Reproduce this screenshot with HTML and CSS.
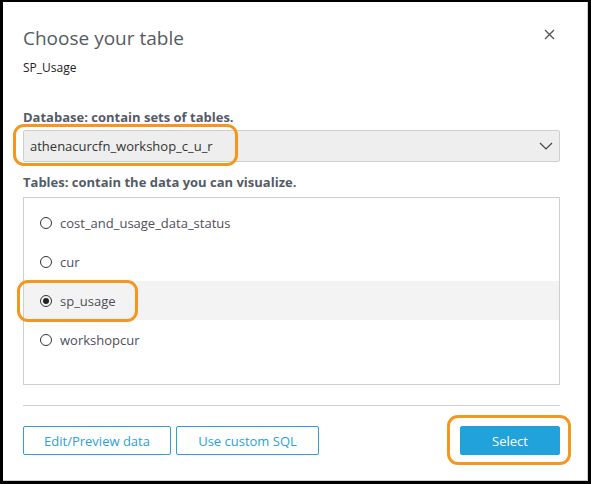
FILE: index.html
```html
<!DOCTYPE html>
<html>
<head>
<meta charset="utf-8">
<link rel="stylesheet" href="styles.css">
</head>
<body>
<div class="frame">
  <div class="dialog">
    <div class="header">
      <div class="titles">
        <h1 class="title">Choose your table</h1>
        <div class="subtitle">SP_Usage</div>
      </div>
      <button class="close" aria-label="Close">
        <svg width="11" height="11" viewBox="0 0 11 11"><path d="M1 1L10 10M10 1L1 10" stroke="#555" stroke-width="1.4" fill="none"/></svg>
      </button>
    </div>

    <div class="label label-db">Database: contain sets of tables.</div>
    <div class="select">
      <span class="select-text">athenacurcfn_workshop_c_u_r</span>
      <svg class="chevron" width="14" height="8" viewBox="0 0 14 8"><path d="M1 1L7 7L13 1" stroke="#444" stroke-width="1.2" fill="none"/></svg>
    </div>

    <div class="label label-tables">Tables: contain the data you can visualize.</div>
    <div class="list">
      <div class="row"><span class="radio"></span><span class="row-text">cost_and_usage_data_status</span></div>
      <div class="row"><span class="radio"></span><span class="row-text">cur</span></div>
      <div class="row row-selected"><span class="radio radio-on"></span><span class="row-text">sp_usage</span></div>
      <div class="row"><span class="radio"></span><span class="row-text">workshopcur</span></div>
    </div>

    <div class="divider"></div>

    <div class="footer">
      <div class="footer-left">
        <button class="btn btn-outline btn-edit">Edit/Preview data</button>
        <button class="btn btn-outline btn-sql">Use custom SQL</button>
      </div>
      <button class="btn btn-primary">Select</button>
    </div>
  </div>

  <div class="mark mark-db"></div>
  <div class="mark mark-row"></div>
  <div class="mark mark-btn"></div>
</div>
</body>
</html>
```
FILE: styles.css
```css
html, body {
  margin: 0;
  padding: 0;
  background: #000;
  width: 591px;
  height: 484px;
  overflow: hidden;
}
.frame {
  position: relative;
  margin: 2px 0 0 3px;
  width: 584px;
  height: 478px;
  background: #fff;
  border-right: 1px solid #d0d0d0;
  border-bottom: 1px solid #d0d0d0;
  font-family: "Open Sans", "Noto Sans", sans-serif;
  color: #333;
}
.dialog {
  padding: 22px 27px 0 20px;
}
.header {
  display: flex;
  justify-content: space-between;
  align-items: flex-start;
}
.title {
  margin: 0;
  font-size: 19px;
  font-weight: 400;
  color: #555b61;
  line-height: 28px;
}
.subtitle {
  margin-top: 8px;
  font-size: 12px;
  color: #222;
  line-height: 16px;
}
.close {
  border: 0;
  background: none;
  padding: 0;
  margin: 5px 5px 0 0;
  width: 11px;
  height: 11px;
  display: flex;
}
.label {
  font-size: 13px;
  font-weight: 700;
  color: #545b64;
  line-height: 16px;
}
.label-db {
  margin-top: 33px;
}
.select {
  margin-top: 5px;
  height: 30px;
  border: 1px solid #cfcfcf;
  border-radius: 2px;
  background: #eeeeee;
  display: flex;
  align-items: center;
  justify-content: space-between;
  padding: 0 6px 0 6px;
}
.select-text {
  font-size: 13px;
  color: #333;
}
.label-tables {
  margin-top: 12px;
}
.list {
  margin-top: 7px;
  height: 188px;
  border: 1px solid #cfcfcf;
  padding-top: 5px;
  box-sizing: border-box;
}
.row {
  height: 39px;
  display: flex;
  align-items: center;
  padding-left: 16px;
}
.row-selected {
  background: #f3f3f3;
}
.radio {
  width: 10px;
  height: 10px;
  border: 1px solid #333;
  border-radius: 50%;
  box-sizing: content-box;
  position: relative;
  margin-right: 8px;
}
.radio-on::after {
  content: "";
  position: absolute;
  left: 2px;
  top: 2px;
  width: 6px;
  height: 6px;
  border-radius: 50%;
  background: #222;
}
.row-text {
  font-size: 13px;
  color: #4e4e5a;
}
.divider {
  margin-top: 20px;
  height: 1px;
  background: #d0d0d0;
}
.footer {
  margin-top: 20px;
  display: flex;
  justify-content: space-between;
  align-items: center;
}
.footer-left {
  display: flex;
  gap: 5px;
}
.btn {
  font-family: "Open Sans", "Noto Sans", sans-serif;
  font-size: 13px;
  height: 29px;
  border-radius: 2px;
  padding: 0;
  cursor: pointer;
}
.btn-outline {
  background: #fff;
  border: 1px solid #2a9fd8;
  color: #2a9fd8;
}
.btn-edit { width: 148px; }
.btn-sql { width: 143px; }
.btn-primary {
  width: 100px;
  background: #22a2db;
  border: 1px solid #22a2db;
  color: #fff;
}
.mark {
  position: absolute;
  border: 3px solid #f5961e;
  border-radius: 11px;
  box-sizing: border-box;
}
.mark-db { left: 10px; top: 122px; width: 225px; height: 42px; }
.mark-row { left: 14px; top: 278px; width: 121px; height: 42px; }
.mark-btn { left: 444px; top: 413px; width: 124px; height: 50px; }
```
